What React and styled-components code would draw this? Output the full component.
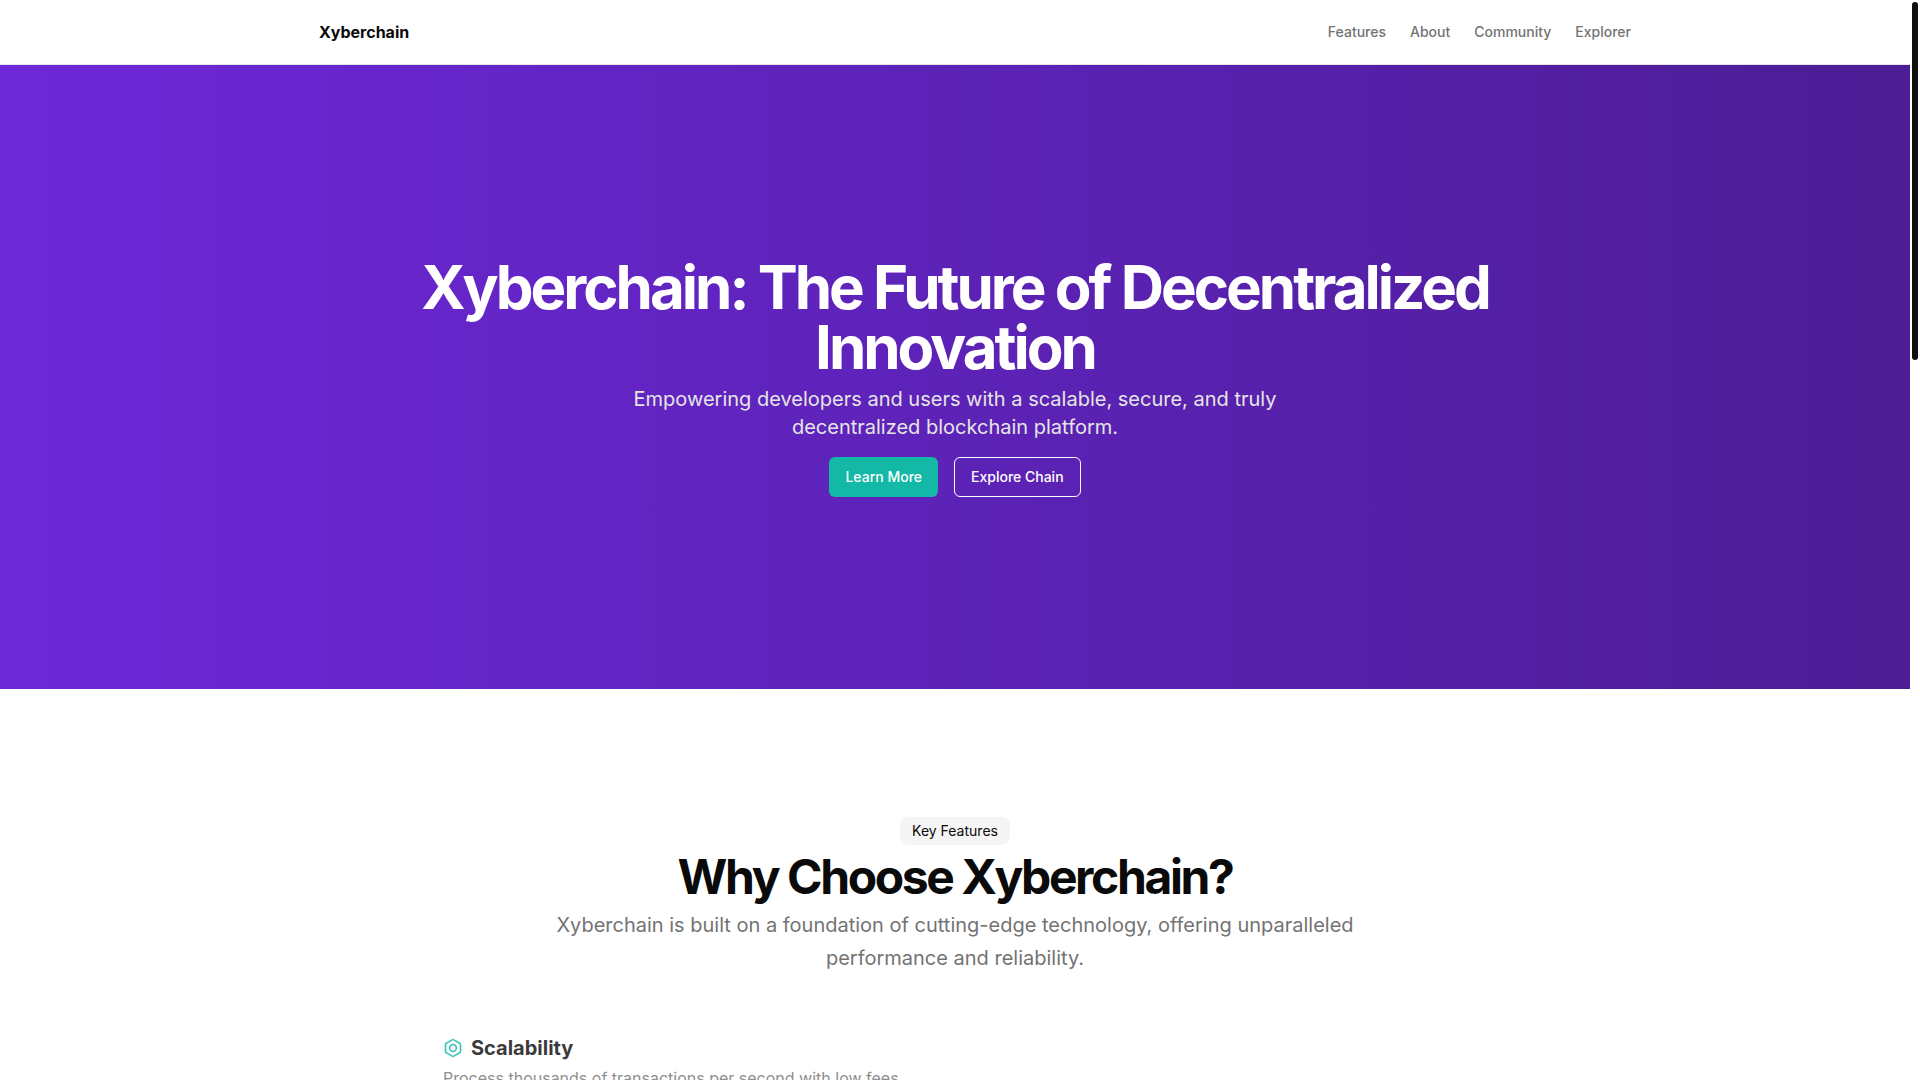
import React from 'react'
import styled, { createGlobalStyle } from 'styled-components'

const navLinks = ['Features', 'About', 'Community', 'Explorer']

const features = [
	{
		title: 'Scalability',
		text: 'Process thousands of transactions per second with low fees.'
	}
]

export default function App() {
	return (
		<>
			<GlobalStyle />
			<Page>
				<Content>
					<Header>
						<HeaderInner>
							<Brand href="#">Xyberchain</Brand>
							<Nav>
								{navLinks.map((label) => (
									<NavLink key={label} href={`#${label.toLowerCase()}`}>
										{label}
									</NavLink>
								))}
							</Nav>
						</HeaderInner>
					</Header>
					<main>
						<Hero>
							<HeroTitle>
								Xyberchain: The Future of Decentralized Innovation
							</HeroTitle>
							<HeroText>
								Empowering developers and users with a scalable, secure, and
								truly decentralized blockchain platform.
							</HeroText>
							<ButtonGroup>
								<Button $primary>Learn More</Button>
								<Button>Explore Chain</Button>
							</ButtonGroup>
						</Hero>
						<Section id="features">
							<Badge>Key Features</Badge>
							<SectionTitle>Why Choose Xyberchain?</SectionTitle>
							<SectionText>
								Xyberchain is built on a foundation of cutting-edge technology,
								offering unparalleled performance and reliability.
							</SectionText>
							<FeatureGrid>
								{features.map((feature) => (
									<Feature key={feature.title} {...feature} />
								))}
							</FeatureGrid>
						</Section>
					</main>
				</Content>
				<ScrollRail>
					<ScrollThumb />
				</ScrollRail>
			</Page>
		</>
	)
}

function Feature({ title, text }) {
	return (
		<FeatureItem>
			<FeatureHeading>
				<HexIcon />
				<FeatureTitle>{title}</FeatureTitle>
			</FeatureHeading>
			<FeatureText>{text}</FeatureText>
		</FeatureItem>
	)
}

function HexIcon() {
	return (
		<svg
			width="20"
			height="20"
			viewBox="0 0 24 24"
			fill="none"
			stroke="#14b8a6"
			strokeWidth="2"
			strokeLinecap="round"
			strokeLinejoin="round"
			aria-hidden="true"
		>
			<path d="M21 16V8a2 2 0 0 0-1-1.73l-7-4a2 2 0 0 0-2 0l-7 4A2 2 0 0 0 3 8v8a2 2 0 0 0 1 1.73l7 4a2 2 0 0 0 2 0l7-4A2 2 0 0 0 21 16z" />
			<circle cx="12" cy="12" r="4" />
		</svg>
	)
}

const GlobalStyle = createGlobalStyle`
	*, *::before, *::after {
		box-sizing: border-box;
	}

	body {
		margin: 0;
		background: #fff;
		color: #0a0a0a;
		font-family: Inter, 'Liberation Sans', sans-serif;
		font-size: 16px;
		line-height: 24px;
	}

	h1, h2, h3, p {
		margin: 0;
	}
`

const Page = styled.div`
	display: flex;
	height: 100vh;
	overflow: hidden;
`

const Content = styled.div`
	flex: 1;
	min-width: 0;
	overflow: hidden;
`

const ScrollRail = styled.div`
	flex: none;
	width: 10px;
	padding: 2px;
`

const ScrollThumb = styled.div`
	height: 33.3%;
	border-radius: 3px;
	background: #0f0f0f;
`

const Header = styled.header`
	border-bottom: 1px solid #e5e5e5;
`

const HeaderInner = styled.div`
	display: flex;
	align-items: center;
	justify-content: space-between;
	max-width: 1400px;
	height: 64px;
	margin: 0 auto;
	padding: 0 24px 0 64px;
`

const Brand = styled.a`
	color: #0a0a0a;
	font-weight: 700;
	text-decoration: none;
`

const Nav = styled.nav`
	display: flex;
	gap: 24px;
`

const NavLink = styled.a`
	color: #737373;
	font-size: 14px;
	font-weight: 500;
	line-height: 20px;
	text-decoration: none;
`

const Hero = styled.section`
	display: flex;
	flex-direction: column;
	align-items: center;
	padding: 192px 24px;
	background: linear-gradient(to right, #6d28d9, #4c1d95);
	color: #fff;
	text-align: center;
`

const HeroTitle = styled.h1`
	max-width: 1352px;
	font-size: 60px;
	font-weight: 700;
	line-height: 60px;
	letter-spacing: -0.05em;
`

const HeroText = styled.p`
	max-width: 700px;
	margin-top: 8px;
	color: #e5e5e5;
	font-size: 20px;
	line-height: 28px;
`

const ButtonGroup = styled.div`
	display: flex;
	gap: 16px;
	margin-top: 16px;
`

const Button = styled.button`
	height: 40px;
	padding: 0 16px;
	border: ${(props) => (props.$primary ? 'none' : '1px solid #fff')};
	border-radius: 6px;
	background: ${(props) => (props.$primary ? '#14b8a6' : 'transparent')};
	color: #fff;
	font-family: inherit;
	font-size: 14px;
	font-weight: 500;
	line-height: 20px;
	cursor: pointer;
`

const Section = styled.section`
	display: flex;
	flex-direction: column;
	align-items: center;
	padding: 128px 24px;
	text-align: center;
`

const Badge = styled.div`
	padding: 4px 12px;
	border-radius: 8px;
	background: #f5f5f5;
	font-size: 14px;
	line-height: 20px;
`

const SectionTitle = styled.h2`
	margin-top: 8px;
	font-size: 48px;
	font-weight: 700;
	line-height: 48px;
	letter-spacing: -0.05em;
`

const SectionText = styled.p`
	max-width: 900px;
	margin-top: 8px;
	color: #737373;
	font-size: 20px;
	line-height: 33px;
`

const FeatureGrid = styled.div`
	display: grid;
	grid-template-columns: 1fr 1fr;
	gap: 48px;
	width: 100%;
	max-width: 1024px;
	padding: 59px 0 48px;
	text-align: left;
`

const FeatureItem = styled.div`
	display: grid;
	gap: 4px;
	opacity: 0.8;
`

const FeatureHeading = styled.div`
	display: flex;
	align-items: center;
	gap: 8px;
`

const FeatureTitle = styled.h3`
	font-size: 20px;
	font-weight: 700;
	line-height: 28px;
`

const FeatureText = styled.p`
	color: #737373;
`
